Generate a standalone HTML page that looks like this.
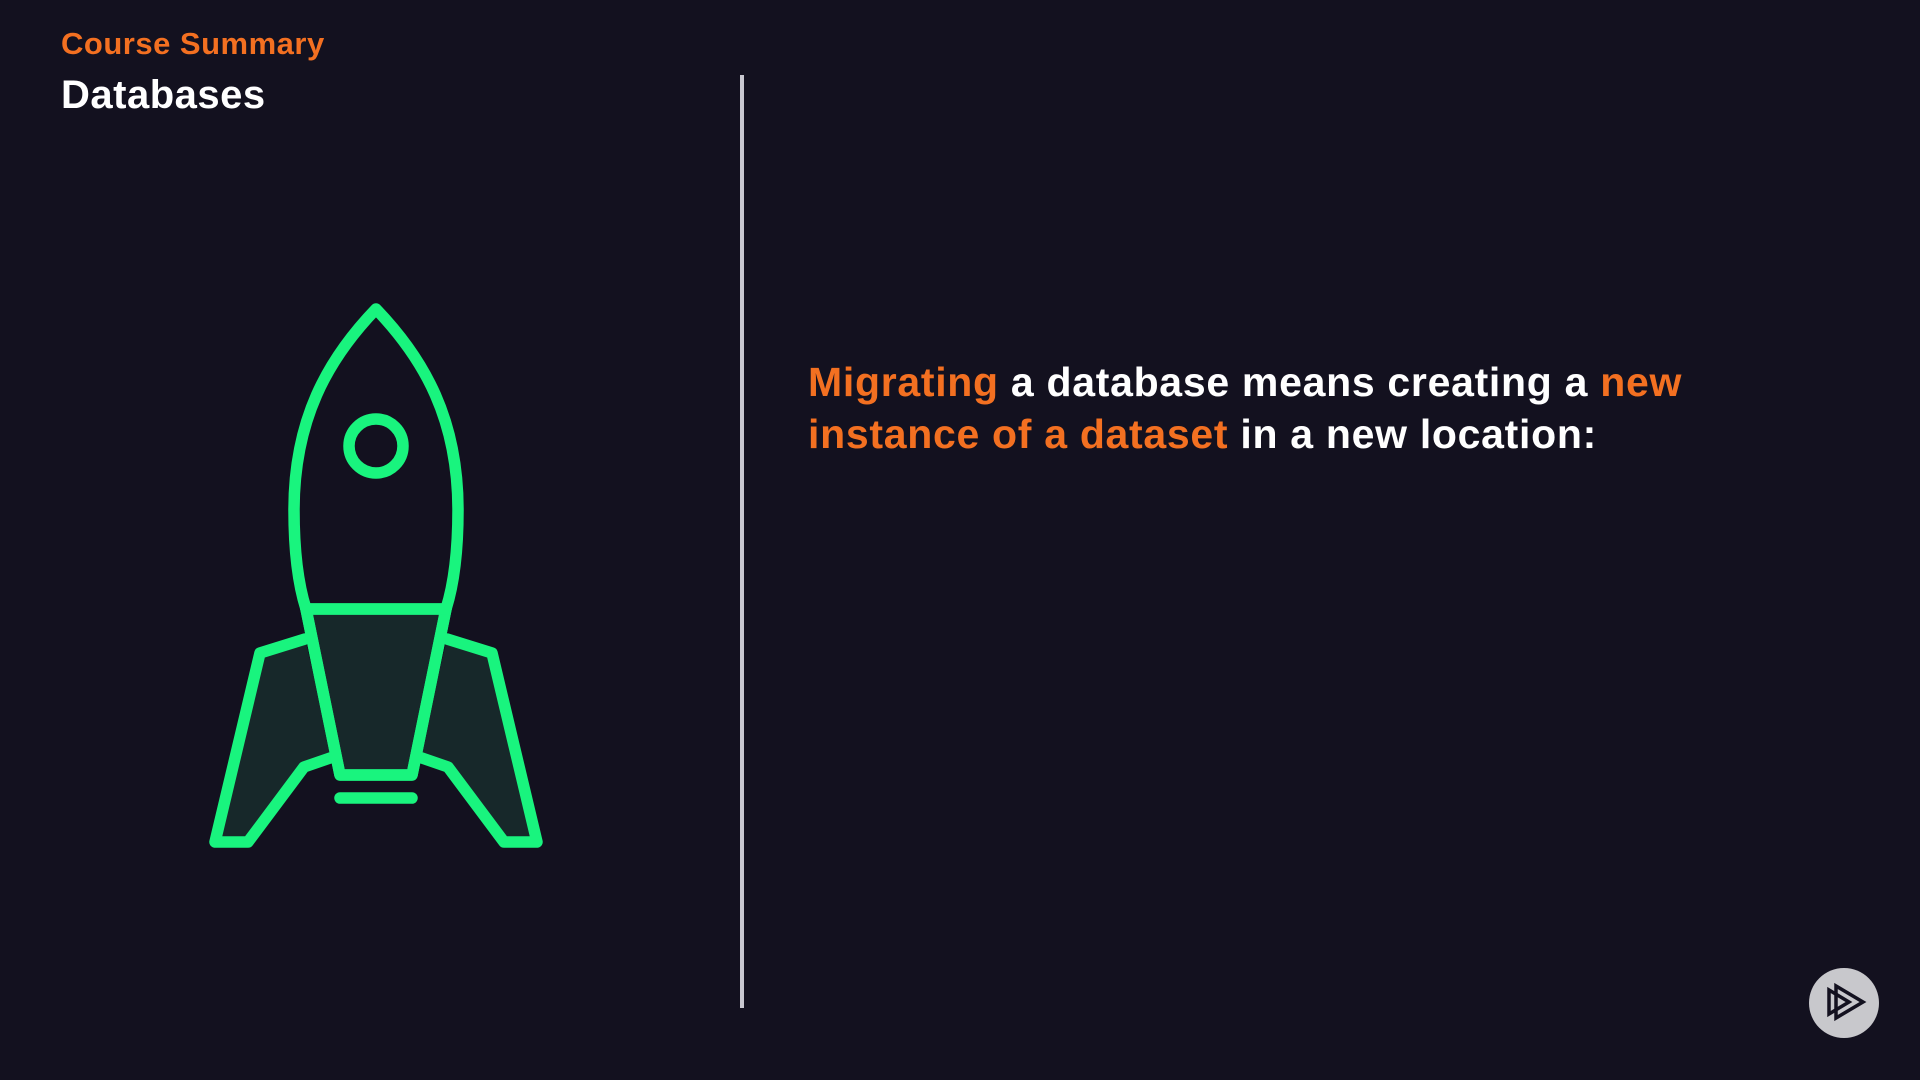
<!DOCTYPE html>
<html><head><meta charset="utf-8"><style>
html,body{margin:0;padding:0;}
body{width:1920px;height:1080px;background:#13111f;position:relative;overflow:hidden;font-family:"Liberation Sans",sans-serif;font-weight:bold;}
.o{color:#f37021;}
#cs{position:absolute;left:61px;top:26px;font-size:31px;color:#f37021;letter-spacing:0.5px;}
#db{position:absolute;left:61px;top:73px;font-size:40px;color:#fff;letter-spacing:0.5px;}
#vl{position:absolute;left:740px;top:75px;width:4px;height:933px;background:#c9c8d0;}
#txt{position:absolute;left:808px;top:356px;font-size:41px;line-height:52px;color:#fff;white-space:nowrap;letter-spacing:0.7px;}
#pb{position:absolute;left:1809px;top:968px;width:70px;height:70px;border-radius:50%;background:#c8c8cc;}
</style></head><body>
<div id="cs">Course Summary</div>
<div id="db">Databases</div>
<div id="vl"></div>
<svg style="position:absolute;left:0;top:0" width="1920" height="1080">
<g stroke="#19f47e" stroke-width="11.5" stroke-linejoin="round" stroke-linecap="round">
<path d="M305,639 L260,653 L215,842 L248,842 L304,767 L333,757" fill="#17282a"/>
<path d="M447,639 L492,653 L537,842 L504,842 L448,767 L419,757" fill="#17282a"/>
<path d="M306,609 L340,775 L412,775 L446,609 Z" fill="#17282a"/>
<path d="M376,309 C327,360 294,420 294,510 C294,560 300,590 306,609 L340,775 L412,775 L446,609 C452,590 458,560 458,510 C458,420 425,360 376,309 Z" fill="none"/>
<line x1="306" y1="609" x2="446" y2="609"/>
<circle cx="376" cy="446" r="27" fill="none"/>
<line x1="340" y1="798" x2="412" y2="798"/>
</g>
</svg>
<div id="txt"><span class="o">Migrating</span> a database means creating a <span class="o">new</span><br><span class="o">instance of a dataset</span> in a new location:</div>
<div id="pb"><svg width="70" height="70"><g fill="none" stroke="#13111f" stroke-width="3.5" stroke-linejoin="miter"><path d="M20,22 L20,46 L40,34 Z"/><path d="M27,18 L27,50 L54,34 Z"/></g></svg></div>
</body></html>
